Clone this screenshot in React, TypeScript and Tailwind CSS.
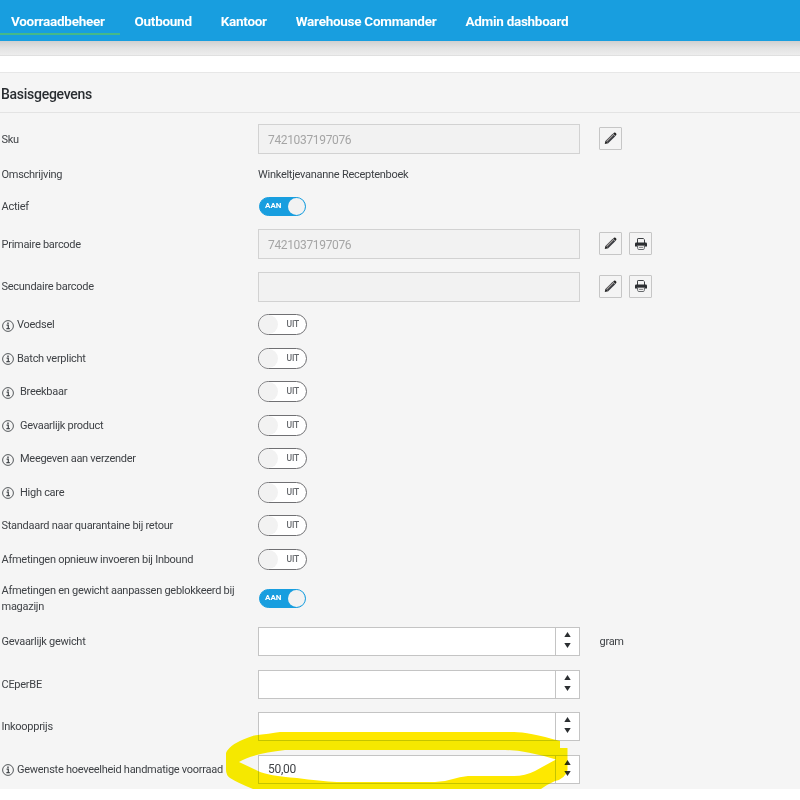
import type { ReactNode } from "react";

const navItems = ["Voorraadbeheer", "Outbound", "Kantoor", "Warehouse Commander", "Admin dashboard"];

function InfoIcon() {
  return (
    <svg className="mt-px h-3 w-3 shrink-0" viewBox="0 0 12 12" fill="none" stroke="#42464a">
      <circle cx="6" cy="6" r="5.4" strokeWidth="0.9" />
      <path d="M4.6 5.2H6.3V8.6M4.4 8.7H7.8" strokeWidth="1.2" />
      <path d="M5.3 3.2H6.7" strokeWidth="1.4" />
    </svg>
  );
}

function PencilIcon() {
  return (
    <svg className="h-[13px] w-[13px]" viewBox="0 0 14 14">
      <path d="M.8 13L1.6 9.4L4.6 12.2Z" fill="#222" />
      <path d="M1.6 9.6L9.3 2L12.1 4.6L4.5 12.2Z" fill="#3b3d42" />
      <path d="M2.9 10.1L9.9 3.2" stroke="#aaa4a1" strokeWidth="1.1" />
      <path d="M9.8 1.7L10.8 .8Q11.6 .2 12.3 .9L13.1 1.7Q13.8 2.4 13.1 3.2L12.3 4.2Z" fill="#222" />
    </svg>
  );
}

function PrintIcon() {
  return (
    <svg className="h-3 w-3" viewBox="0 0 12 12">
      <path d="M2.5 5V1.1Q2.5 .5 3.1 .5H8.3L9.5 1.7V5" fill="#f4f4f4" stroke="#3b3e41" />
      <path d="M1.3 4.4H10.7Q12 4.4 12 5.6V8.6H0V5.6Q0 4.4 1.3 4.4Z" fill="#2b2e31" />
      <path d="M2.4 7.6H9.6L9.2 10.8Q9.1 11.5 8.4 11.5H3.6Q2.9 11.5 2.8 10.8Z" fill="#f4f4f4" stroke="#55585b" strokeWidth="0.9" />
      <path d="M3.4 7.6H8.6M4 9.5H8" stroke="#777" strokeWidth="0.8" />
    </svg>
  );
}

function IconButton({ children }: { children: ReactNode }) {
  return (
    <button className="flex h-[23px] w-[23px] items-center justify-center rounded-[1px] border border-[#c6c6c6] bg-[#f4f4f4]">
      {children}
    </button>
  );
}

function Toggle({ on = false }: { on?: boolean }) {
  if (on) {
    return (
      <div className="ml-px flex h-[19px] w-[47px] items-center justify-between rounded-full border border-[#189edf] bg-[#189edf] pl-[5px] text-[8px] font-bold tracking-normal text-white">
        <span>AAN</span>
        <span className="h-[17px] w-[17px] rounded-full bg-[#f2f2f2]" />
      </div>
    );
  }
  return (
    <div className="flex h-[21px] w-[49px] items-center justify-between rounded-full border border-[#707073] bg-white pr-[7px] text-[8.5px] font-medium tracking-[-0.2px] text-[#66696d]">
      <span className="h-[19px] w-[19px] rounded-full bg-[#f2f2f2]" />
      <span>UIT</span>
    </div>
  );
}

function DisabledInput({ value = "" }: { value?: string }) {
  return (
    <div className="flex h-[30px] w-[322px] items-center border border-[#d2d2d2] bg-[#f2f2f2] px-[9px] pt-px text-[12px] tracking-[-0.34px] text-[#a5a5a5]">
      {value}
    </div>
  );
}

function NumberInput({ value = "" }: { value?: string }) {
  return (
    <div className="flex h-[29px] w-[322px] border border-[#c4c4c4] bg-white">
      <div className="flex flex-1 items-center px-[9px] text-[12px]">{value}</div>
      <div className="flex w-6 flex-col items-center gap-[6px] border-l border-[#c4c4c4] pt-1">
        <svg className="h-[5px] w-[7px]" viewBox="0 0 7 5"><path d="M3.5 0L6.7 5H.3Z" fill="#2b2e31" /></svg>
        <svg className="h-[5px] w-[7px]" viewBox="0 0 7 5"><path d="M3.5 5L6.7 0H.3Z" fill="#2b2e31" /></svg>
      </div>
    </div>
  );
}

type RowProps = {
  label: string;
  height?: string;
  info?: boolean;
  gap?: string;
  actions?: ReactNode;
  children: ReactNode;
};

function Row({ label, height = "h-[33.5px]", info, gap = "gap-[3.5px]", actions, children }: RowProps) {
  return (
    <div className={`flex shrink-0 items-center ${height}`}>
      <div className={`flex w-[258px] shrink-0 items-center pt-px pr-4 pl-[1.5px] ${gap}`}>
        {info && <InfoIcon />}
        <span className="leading-4">{label}</span>
      </div>
      <div className="flex w-[322px] shrink-0 items-center">{children}</div>
      {actions && <div className="flex items-center gap-[7px] pb-px pl-[19px]">{actions}</div>}
    </div>
  );
}

export default function App() {
  return (
    <div className="relative h-[800px] w-[800px] overflow-hidden bg-white font-[Roboto,sans-serif] text-[11px] tracking-[-0.27px] text-[#3f4246]">
      <nav className="flex h-[41px] items-start gap-[29px] bg-[#189edf] text-[13.5px] font-bold tracking-[-0.27px] text-white">
        {navItems.map((item, i) => (
          <a
            key={item}
            className={
              i === 0
                ? "-mr-[14.5px] h-[35px] w-[120px] border-b-2 border-[#45b989] pt-[11px] pl-[11px] leading-5"
                : "pt-[11px] leading-5"
            }
          >
            {item}
          </a>
        ))}
      </nav>
      <div className="h-[15px] border-b border-[#e0e0e0] bg-linear-to-b from-[#d0d0d0] via-[#e3e3e3] to-[#ededed]" />
      <div className="h-[17px] border-b border-[#e7e7e7] bg-white" />

      <main className="flex h-[716px] flex-col overflow-hidden bg-[#f5f5f5]">
        <h2 className="flex h-10 shrink-0 items-center border-b border-[#e3e3e3] pt-[3px] pl-px text-[14px] font-medium text-[#292d31]">
          Basisgegevens
        </h2>
        <div className="flex flex-col pt-[6.25px]">
          <Row label="Sku" height="h-[39.5px]" actions={<IconButton><PencilIcon /></IconButton>}>
            <DisabledInput value="7421037197076" />
          </Row>
          <Row label="Omschrijving" height="h-[30.5px]"><span className="pt-[2px]">Winkeltjevananne Receptenboek</span></Row>
          <Row label="Actief"><Toggle on /></Row>
          <Row
            label="Primaire barcode"
            height="h-[42.5px]"
            actions={<><IconButton><PencilIcon /></IconButton><IconButton><PrintIcon /></IconButton></>}
          >
            <DisabledInput value="7421037197076" />
          </Row>
          <Row
            label="Secundaire barcode"
            height="h-[42.5px]"
            actions={<><IconButton><PencilIcon /></IconButton><IconButton><PrintIcon /></IconButton></>}
          >
            <DisabledInput />
          </Row>
          <Row label="Voedsel" info><Toggle /></Row>
          <Row label="Batch verplicht" info><Toggle /></Row>
          <Row label="Breekbaar" info gap="gap-[6.5px]"><Toggle /></Row>
          <Row label="Gevaarlijk product" info gap="gap-[6.5px]"><Toggle /></Row>
          <Row label="Meegeven aan verzender" info gap="gap-[6.5px]"><Toggle /></Row>
          <Row label="High care" info gap="gap-[6.5px]"><Toggle /></Row>
          <Row label="Standaard naar quarantaine bij retour"><Toggle /></Row>
          <Row label="Afmetingen opnieuw invoeren bij Inbound"><Toggle /></Row>
          <Row label="Afmetingen en gewicht aanpassen geblokkeerd bij magazijn" height="h-[44.5px]"><Toggle on /></Row>
          <Row label="Gevaarlijk gewicht" height="h-[42.5px]" actions={<span className="pt-[2px] pl-[0.5px]">gram</span>}><NumberInput /></Row>
          <Row label="CEperBE" height="h-[42.5px]"><NumberInput /></Row>
          <Row label="Inkoopprijs" height="h-[42.5px]"><NumberInput /></Row>
          <Row label="Gewenste hoeveelheid handmatige voorraad" height="h-[42.5px]" info><NumberInput value="50,00" /></Row>
        </div>
      </main>

      {/* highlighter stroke; darken keeps the field borders visible */}
      <svg className="pointer-events-none absolute top-[720px] left-[220px] h-[69px] w-[360px] mix-blend-darken" viewBox="220 720 360 69">
        <path
          fillRule="evenodd"
          fill="#fee800"
          d="M226 753Q230 743 254 735.5Q270 733.5 280 732H514Q528 732 560 741V748H567.5V770Q565 779 555 781Q548 784 541 789H253Q238 783 230 778Q226 775 226 770ZM239 762Q251 754 285 750H505Q524 750 556 759.5Q544 766 535 771Q525 776 514 776H468Q459 777 453 779Q444 782 435 782H337Q320 781 297 778Q268 776 258 771Z"
        />
      </svg>
    </div>
  );
}
